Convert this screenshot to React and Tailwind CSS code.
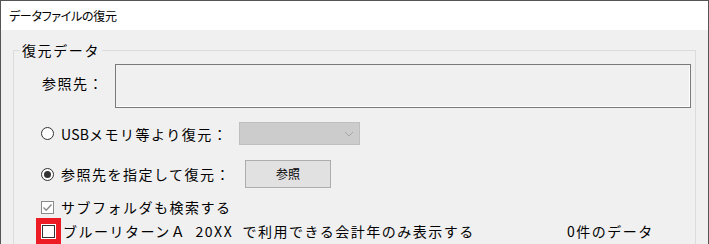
import React from 'react';

const Radio = ({ checked }) => (
  <span className="w-[13px] h-[13px] rounded-full border border-[#333] bg-white flex items-center justify-center shrink-0">
    {checked && <span className="w-[7px] h-[7px] rounded-full bg-[#333]" />}
  </span>
);

const Check = ({ checked, muted }) => (
  <span
    className={`w-[13px] h-[13px] border bg-white flex items-center justify-center shrink-0 ${
      muted ? 'border-[#8a8a8a]' : 'border-[#333]'
    }`}
  >
    {checked && (
      <svg width="11" height="11" viewBox="0 0 11 11">
        <polyline points="1.5,5.5 4.2,8.2 9.5,2.5" fill="none" stroke="#8a8a8a" strokeWidth="1.4" />
      </svg>
    )}
  </span>
);

const App = () => {
  return (
    <div className="w-[709px] h-[244px] overflow-hidden border-t border-x border-[#555] flex flex-col font-['Noto_Sans_CJK_JP','Liberation_Sans',sans-serif] text-black">
      {/* Title bar */}
      <div className="h-[29px] bg-white flex items-center pl-[8px] shrink-0">
        <span className="text-[12px] leading-none [font-feature-settings:'palt'] tracking-[-0.3px]">
          データファイルの復元
        </span>
      </div>

      {/* Body */}
      <div className="flex-1 bg-[#f0f0f0] px-[12px] pt-[10px]">
        <fieldset className="border border-[#dcdcdc] h-[230px] pl-[27px] pr-[4px]">
          <legend className="-ml-[21px] px-[2px] text-[14px] leading-[20px] tracking-[1.6px]">
            復元データ
          </legend>

          {/* 参照先 */}
          <div className="flex items-start mt-[4px] text-[14px] tracking-[1.5px]">
            <span className="w-[74px] leading-[20px] mt-[9px] pl-[1px]">参照先：</span>
            <div className="w-[576px] h-[44px] border border-[#7a7a7a] bg-[#f0f0f0] shadow-[inset_-1px_-1px_0_#fff]" />
          </div>

          {/* USB */}
          <div className="flex items-center mt-[14px] h-[23px] text-[14px] tracking-[1.5px]">
            <div className="w-[198px] flex items-center gap-[7px]">
              <Radio />
              <span className="leading-[20px]">
                <span className="tracking-[0.2px]">USB</span>メモリ等より復元：
              </span>
            </div>
            <div className="w-[121px] h-[23px] bg-[#cccccc] border border-[#bfbfbf] flex items-center justify-end pr-[5px]">
              <svg width="10" height="6" viewBox="0 0 10 6">
                <polyline points="1,1 5,5 9,1" fill="none" stroke="#a6a6a6" strokeWidth="1" />
              </svg>
            </div>
          </div>

          {/* 参照先を指定 */}
          <div className="flex items-center mt-[15px] h-[28px] text-[14px] tracking-[1.5px]">
            <div className="w-[204px] flex items-center gap-[7px]">
              <Radio checked />
              <span className="leading-[20px]">参照先を指定して復元：</span>
            </div>
            <button className="w-[86px] h-[28px] bg-[#e1e1e1] border border-[#adadad] text-[12px] tracking-normal leading-none">
              参照
            </button>
          </div>

          {/* サブフォルダ */}
          <div className="flex items-center mt-[11px] h-[16px] text-[14px] tracking-[1.5px] gap-[7px]">
            <Check checked muted />
            <span className="leading-[20px]">サブフォルダも検索する</span>
          </div>

          {/* ブルーリターン */}
          <div className="flex items-center mt-[3px] h-[26px] text-[14px] tracking-[1.5px]">
            <div className="w-[526px] flex items-center">
              <span className="-ml-[5px] w-[25px] h-[26px] bg-[#ed1c24] flex items-center justify-center shrink-0">
                <span className="p-[1px] bg-white flex">
                  <Check />
                </span>
              </span>
              <span className="ml-[2px] leading-[20px] whitespace-pre">ブルーリターンＡ  20XX  で利用できる会計年のみ表示する</span>
            </div>
            <span className="leading-[20px]">0件のデータ</span>
          </div>
        </fieldset>
      </div>
    </div>
  );
};

export default App;
